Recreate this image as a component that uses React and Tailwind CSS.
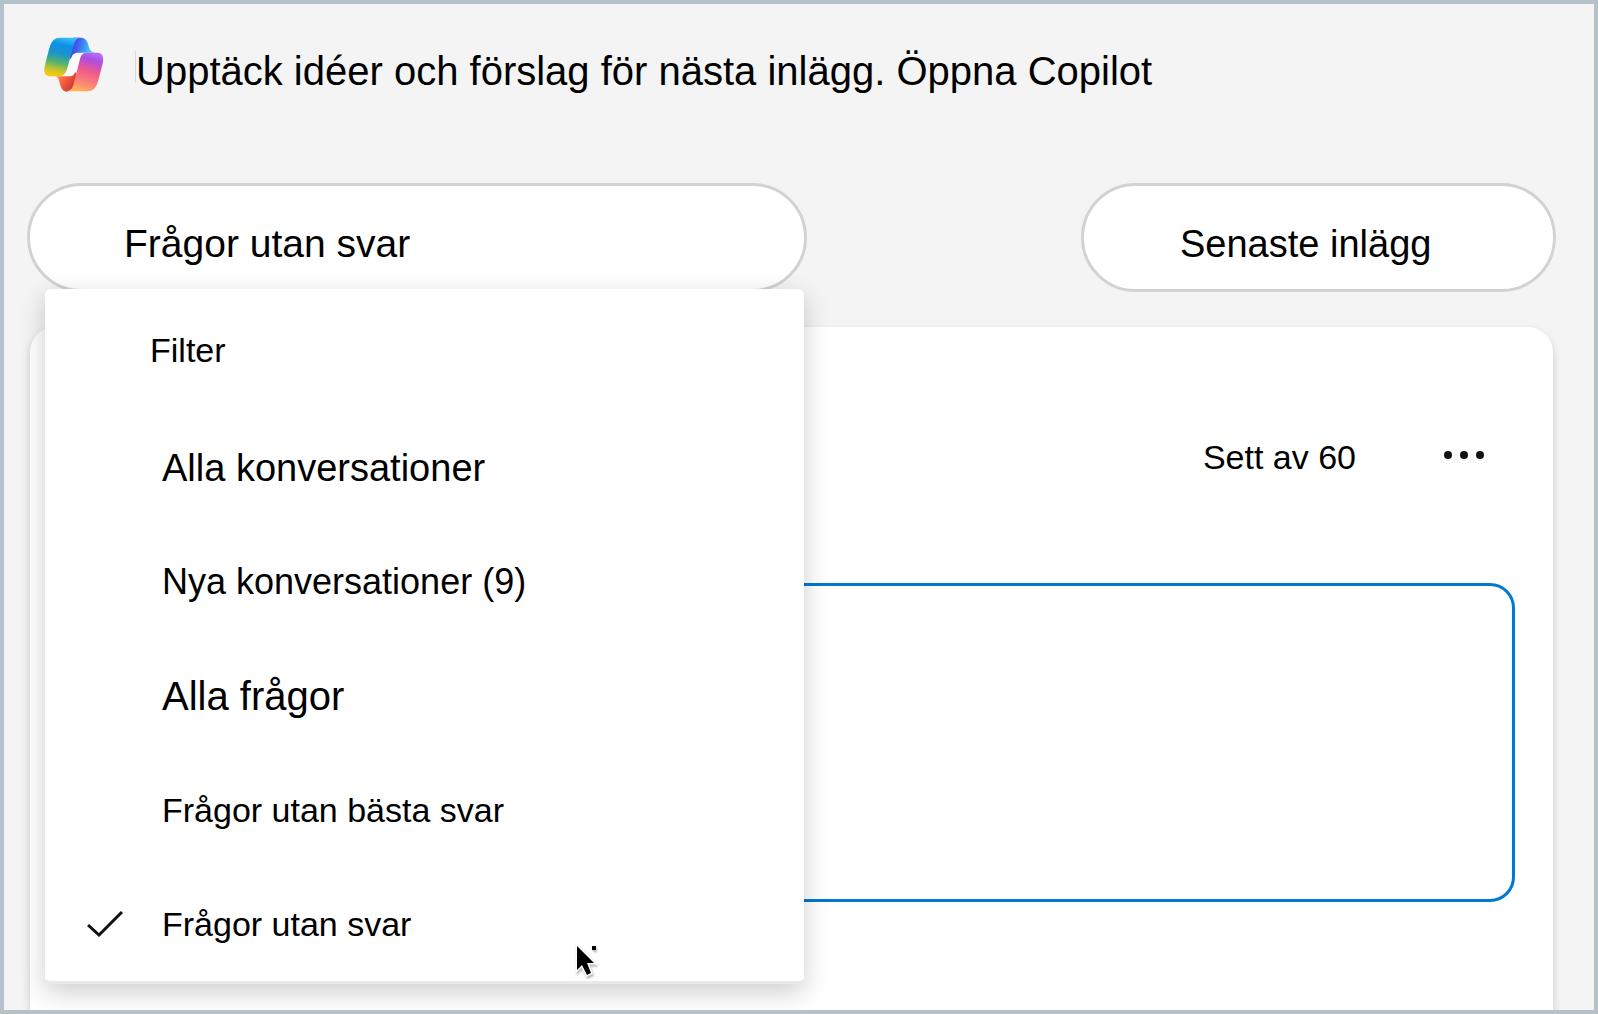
import { useState } from 'react'

const FILTERS = [
  { id: 'all',        label: 'Alla konversationer',     size: 'text-[38px]' },
  { id: 'new',        label: 'Nya konversationer (9)',  size: 'text-[36px]' },
  { id: 'questions',  label: 'Alla frågor',             size: 'text-[40px]' },
  { id: 'no-best',    label: 'Frågor utan bästa svar',  size: 'text-[34px]' },
  { id: 'unanswered', label: 'Frågor utan svar',        size: 'text-[34px]' },
]

function CopilotLogo() {
  return (
    <svg className="w-[60px] h-[55px] flex-shrink-0" viewBox="43 37 180 165" aria-hidden="true">
      <defs>
        <linearGradient id="left" x1="0.6" y1="0" x2="0.4" y2="1">
          <stop offset="0" stopColor="#35bdf8" />
          <stop offset="0.2" stopColor="#0d8fe6" />
          <stop offset="0.42" stopColor="#1a93cf" />
          <stop offset="0.66" stopColor="#52b36c" />
          <stop offset="0.85" stopColor="#c3c52c" />
          <stop offset="1" stopColor="#fbc70d" />
        </linearGradient>
        <linearGradient id="fold" x1="0" y1="0.3" x2="1" y2="0.5">
          <stop offset="0.15" stopColor="#3f3fe0" />
          <stop offset="0.4" stopColor="#4560f0" />
          <stop offset="0.75" stopColor="#3cb5f7" />
          <stop offset="1" stopColor="#5bcdfb" />
        </linearGradient>
        <linearGradient id="right" x1="0.65" y1="0" x2="0.35" y2="1">
          <stop offset="0" stopColor="#b76af0" />
          <stop offset="0.15" stopColor="#ab4ee3" />
          <stop offset="0.45" stopColor="#f0598f" />
          <stop offset="0.75" stopColor="#fb8276" />
          <stop offset="1" stopColor="#ffb454" />
        </linearGradient>
        <linearGradient id="tail" x1="0" y1="0" x2="1" y2="0.5">
          <stop offset="0" stopColor="#ffa44f" />
          <stop offset="0.45" stopColor="#fa6440" />
          <stop offset="1" stopColor="#c93030" />
        </linearGradient>
      </defs>
      <path fill="#fbfbfc" d="M120 84H170L140 155H90Z" />
      <path fill="url(#fold)" d="M130 39H152C166 39 172 46 175 58L178 68C181 78 186 83 196 84H148C134 84 128 88 124 102L112 100Z" />
      <path fill="url(#tail)" d="M75 155H118C128 155 133 152 136 142L146 150L132 190L112 201C100 201 95 192 92 182L89 172C86 160 84 156 75 155Z" />
      <path fill="url(#left)" d="M92 39H152C141 40 136 48 132 62L112 134C107 150 99 155 84 155H62C44 155 41 140 46 120L58 74C65 48 74 39 92 39Z" />
      <path fill="url(#right)" d="M170 84H202C220 84 224 99 218 120L207 164C200 191 190 200 172 200H112C123 199 128 191 132 177L150 107C154 91 158 85 170 84Z" />
    </svg>
  )
}

function CheckIcon() {
  return (
    <svg className="w-9 h-[26px]" viewBox="0 0 36 26" fill="none" stroke="#111" strokeWidth="3" aria-hidden="true">
      <path d="M1 14L12 24L35 1" />
    </svg>
  )
}

function Pointer() {
  return (
    <svg
      className="absolute left-[528px] top-[653px] w-7 h-9 drop-shadow-[1px_2px_1px_rgba(0,0,0,0.3)] pointer-events-none"
      viewBox="0 0 28 36"
      aria-hidden="true"
    >
      <path d="M4 4V28L9 23L14 33L18 31L14 21H21Z" fill="#000" stroke="#fff" strokeWidth="3" paintOrder="stroke" />
      <rect x="19" y="4" width="4" height="4" fill="#000" />
    </svg>
  )
}

function FilterMenu({ selected, onSelect }) {
  return (
    <div
      role="menu"
      aria-labelledby="filter-heading"
      className="absolute z-10 left-[18px] top-[106px] w-[759px] bg-white rounded-[6px] border-b-[3px] border-[#e9e9e8] shadow-[0_8px_26px_rgba(0,0,0,0.2)]"
    >
      <h2 id="filter-heading" className="h-[122px] pl-[105px] flex items-center text-[34px]">
        Filter
      </h2>
      {FILTERS.map(({ id, label, size }) => (
        <button
          key={id}
          role="menuitemradio"
          aria-checked={id === selected}
          onClick={() => onSelect(id)}
          className={`w-full h-[114px] flex items-center text-left ${size}`}
        >
          <span className="w-[117px] pl-[42px]">{id === selected && <CheckIcon />}</span>
          {label}
        </button>
      ))}
      <Pointer />
    </div>
  )
}

export default function App() {
  const [open, setOpen]         = useState(true)
  const [selected, setSelected] = useState('unanswered')

  return (
    <div className="min-h-screen flex flex-col overflow-hidden bg-[#f4f4f4] border-4 border-[#b4c2ca] text-black leading-[52px] font-['Liberation_Sans',Arial,sans-serif]">
      {/* Copilot prompt */}
      <header className="flex items-start pt-[33px] pl-10">
        <CopilotLogo />
        <span className="w-px h-8 mt-[14px] ml-[31px] bg-[#d9d9d9]" />
        <p className="mt-2 text-[40px]">
          Upptäck idéer och förslag för nästa inlägg. Öppna Copilot
        </p>
      </header>

      <main className="flex-1 flex flex-col pl-[23px] pr-[38px] pt-[86px]">
        {/* Filter and sort */}
        <div className="flex justify-between">
          <div className="relative">
            <button
              aria-haspopup="menu"
              aria-expanded={open}
              onClick={() => setOpen(o => !o)}
              className="w-[780px] h-[109px] pl-[94px] pt-3 text-left text-[39px] bg-white border-[3px] border-[#d2d2d2] rounded-full"
            >
              Frågor utan svar
            </button>
            {open && <FilterMenu selected={selected} onSelect={setSelected} />}
          </div>
          <button className="w-[475px] h-[109px] pl-24 pt-3 text-left text-[38px] bg-white border-[3px] border-[#d2d2d2] rounded-full">
            Senaste inlägg
          </button>
        </div>

        {/* Conversation card */}
        <article className="flex-1 mt-[35px] mx-[3px] px-[38px] pt-[104px] bg-white rounded-t-[25px] shadow-[0_4px_9px_rgba(0,0,0,0.17)]">
          <div className="flex items-center justify-end gap-[87px] pr-[30px]">
            <span className="text-[34px]">Sett av 60</span>
            <button aria-label="Fler alternativ" className="pb-1">
              <svg className="w-[42px] h-2" viewBox="0 0 42 8" fill="#111" aria-hidden="true">
                <circle cx="5" cy="4" r="4" />
                <circle cx="21" cy="4" r="4" />
                <circle cx="37" cy="4" r="4" />
              </svg>
            </button>
          </div>
          <div className="mt-[100px] mb-[108px] h-[319px] border-[3px] border-[#0078d4] rounded-[25px]" />
        </article>
      </main>
    </div>
  )
}
